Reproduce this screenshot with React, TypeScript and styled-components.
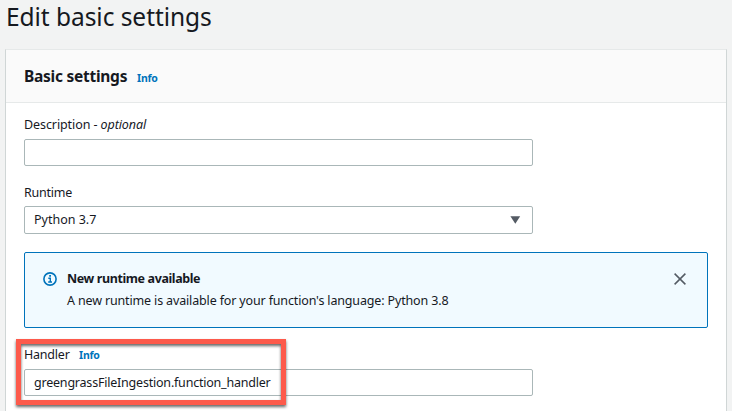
import React from 'react';
import styled, { createGlobalStyle } from 'styled-components';

const GlobalStyle = createGlobalStyle`
  * { box-sizing: border-box; }
  html, body { margin: 0; background: #f2f3f3; overflow: hidden; }
  body {
    font-family: "Noto Sans", "Open Sans", sans-serif;
    font-size: 12.5px;
    line-height: 18px;
    color: #16191f;
  }
`;

const Page = styled.main`
  height: 411px;
  padding: 0 5px;
  display: flex;
  flex-direction: column;
  overflow: hidden;
`;

const Text = styled.span<{ $spacing?: number }>`
  white-space: nowrap;
  letter-spacing: ${({ $spacing = 0 }) => $spacing}px;
`;

const PageTitle = styled.h1`
  flex: none;
  height: 49px;
  margin: 0;
  padding: 0 0 0 1px;
  font-size: 24.5px;
  line-height: 33px;
  font-weight: 400;
`;

const Panel = styled.section`
  flex: none;
  width: 722px;
  height: 380px;
  background: #fff;
  border: 1px solid #d0d6d6;
  border-top-color: #e6e9e9;
`;

const PanelHeader = styled.header`
  height: 53px;
  padding: 0 18px;
  display: flex;
  align-items: center;
  background: #fafafa;
  border-bottom: 1px solid #e6e9e9;
`;

const PanelTitle = styled.h2`
  margin: 0;
  width: 112px;
  font-size: 15.5px;
  line-height: 22px;
  font-weight: 700;
`;

const InfoLink = styled.a<{ $top?: number }>`
  color: #0073bb;
  font-size: 10.5px;
  font-weight: 700;
  padding-left: 1px;
  padding-top: ${({ $top = 0 }) => $top}px;
`;

const Form = styled.div`
  padding: 13px 18px 0;
  display: flex;
  flex-direction: column;
`;

const Field = styled.div<{ $gap: number; $inner?: number }>`
  display: flex;
  flex-direction: column;
  gap: ${({ $inner = 5 }) => $inner}px;
  margin-bottom: ${({ $gap }) => $gap}px;
`;

const Label = styled.div`
  height: 18px;
  display: flex;
  align-items: center;
`;

const LabelName = styled.span<{ $width?: number }>`
  width: ${({ $width }) => ($width ? `${$width}px` : 'auto')};
`;

const Control = styled.div<{ $height?: number }>`
  width: 509px;
  height: ${({ $height = 27 }) => $height}px;
  padding: 0 11px 0 9px;
  display: flex;
  align-items: center;
  justify-content: space-between;
  background: #fff;
  border: 1px solid #aab7b8;
  border-radius: 2px;
`;

const Alert = styled.div`
  width: 684px;
  height: 76px;
  margin-bottom: 18px;
  padding: 17px 21px 0 18px;
  display: flex;
  align-items: flex-start;
  background: #f1faff;
  border: 1px solid #0073bb;
  border-radius: 2px;
`;

const AlertBody = styled.div`
  flex: 1;
  padding-left: 10px;
  display: flex;
  flex-direction: column;
  gap: 4px;
`;

const AlertTitle = styled.strong`
  font-weight: 700;
`;

const Icon = styled.svg<{ $top?: number }>`
  display: block;
  flex: none;
  margin-top: ${({ $top = 0 }) => $top}px;
`;

const Highlight = styled.div`
  position: absolute;
  left: 16px;
  top: 339px;
  width: 270px;
  height: 66px;
  border: 5px solid #fd5a4b;
  filter: drop-shadow(0 2px 1.5px rgba(0, 0, 0, 0.6));
`;

export default function App() {
  return (
    <>
      <GlobalStyle />
      <Page>
        <PageTitle><Text $spacing={-0.05}>Edit basic settings</Text></PageTitle>
        <Panel>
          <PanelHeader>
            <PanelTitle><Text $spacing={-0.26}>Basic settings</Text></PanelTitle>
            <InfoLink $top={4}><Text $spacing={-0.2}>Info</Text></InfoLink>
          </PanelHeader>
          <Form>
            <Field $gap={18}>
              <Label><Text $spacing={-0.09}>Description - <em>optional</em></Text></Label>
              <Control />
            </Field>
            <Field $gap={18} $inner={4}>
              <Label><Text $spacing={-0.22}>Runtime</Text></Label>
              <Control $height={28}>
                <Text>Python 3.7</Text>
                <Icon width="11" height="8" viewBox="0 0 11 8">
                  <path d="M.4.2h9.8L5.3 7.8z" fill="#545b64" />
                </Icon>
              </Control>
            </Field>
            <Alert>
              <Icon $top={2} width="14" height="14" viewBox="0 0 14 14" fill="none" stroke="#0073bb">
                <circle cx="7" cy="7" r="6.1" strokeWidth="1.6" />
                <path d="M5.3 6.2h2v3.6M5.2 10h3.8" strokeWidth="1.4" />
                <path d="M6.2 3.9h1.8" strokeWidth="1.6" />
              </Icon>
              <AlertBody>
                <AlertTitle><Text $spacing={-0.39}>New runtime available</Text></AlertTitle>
                <Text $spacing={-0.15}>A new runtime is available for your function's language: Python 3.8</Text>
              </AlertBody>
              <Icon $top={3} width="12" height="12" viewBox="0 0 12 12" stroke="#545b64" strokeWidth="1.5">
                <path d="M.6.6l10.8 10.8M11.4.6L.6 11.4" />
              </Icon>
            </Alert>
            <Field $gap={0}>
              <Label>
                <LabelName $width={54}><Text $spacing={-0.22}>Handler</Text></LabelName>
                <InfoLink><Text $spacing={-0.2}>Info</Text></InfoLink>
              </Label>
              <Control><Text $spacing={-0.21}>greengrassFileIngestion.function_handler</Text></Control>
            </Field>
          </Form>
        </Panel>
      </Page>
      <Highlight />
    </>
  );
}
